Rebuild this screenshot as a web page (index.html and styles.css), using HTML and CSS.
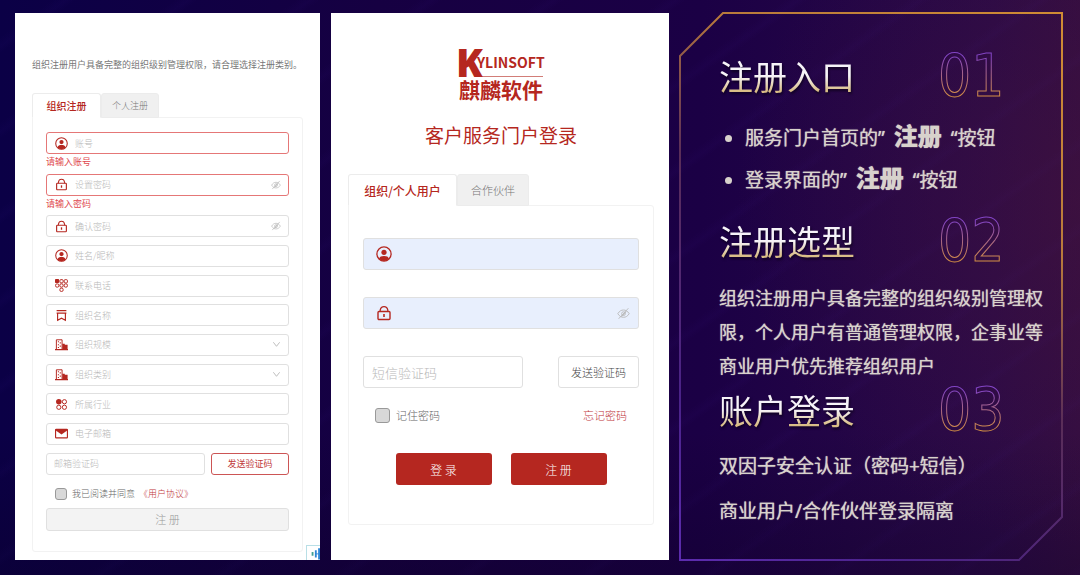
FILE: index.html
```html
<!DOCTYPE html>
<html lang="zh-CN">
<head>
  <meta charset="UTF-8" />
  <meta name="viewport" content="width=device-width, initial-scale=1.0" />
  <title>客户服务门户 - 注册与登录</title>
  <link rel="stylesheet" href="styles.css">
</head>
<body>
  <!-- shared icons -->
  <svg class="sprite" aria-hidden="true">
    <symbol id="user" viewBox="0 0 16 16">
      <circle cx="8" cy="8" r="7.1" fill="none" stroke="currentColor" stroke-width="1.3" />
      <circle cx="8" cy="6.3" r="2.6" fill="currentColor" />
      <path d="M3 12.8C3.6 10.6 5.4 9.9 8 9.9s4.4.7 5 2.9A7 7 0 0 1 8 15a7 7 0 0 1-5-2.2z" fill="currentColor" />
    </symbol>
    <symbol id="lock" viewBox="0 0 16 16">
      <rect x="2" y="6.5" width="12" height="8" rx="1" fill="none" stroke="currentColor" stroke-width="1.4" />
      <path d="M4.2 5.2C4.6 2.8 6 1.6 8 1.6s3.4 1.2 3.8 3.6v1.3M4.2 5v1.5" fill="none" stroke="currentColor" stroke-width="1.3" />
      <path d="M8 9v3" stroke="currentColor" stroke-width="1.6" />
    </symbol>
    <symbol id="phone" viewBox="0 0 16 16">
      <rect x="0" y="0" width="5" height="5" rx="1" fill="currentColor" />
      <g fill="none" stroke="currentColor" stroke-width="1.2">
        <rect x="6" y=".8" width="4" height="4" rx="1.2" />
        <rect x="11.3" y=".8" width="4" height="4" rx="1.2" />
        <rect x=".7" y="6" width="4" height="4" rx="1.6" />
        <rect x="6" y="6" width="4" height="4" rx="1.6" />
        <rect x="11.3" y="6" width="4" height="4" rx="1.6" />
        <rect x="6" y="11.3" width="4" height="4" rx="1.6" />
      </g>
    </symbol>
    <symbol id="org" viewBox="0 0 16 16">
      <path d="M2 2h12" stroke="currentColor" stroke-width="1.5" />
      <path d="M3.2 5h9.6v9L8 11.4 3.2 14zM2 5h12" fill="none" stroke="currentColor" stroke-width="1.4" />
    </symbol>
    <symbol id="building" viewBox="0 0 16 16">
      <path d="M1.7 14V2.2h7V14" fill="none" stroke="currentColor" stroke-width="1.2" />
      <path d="M9 7h3v1.2h3.500V14H9zM0 13.6h16V15H0z" fill="currentColor" />
      <path d="M3.5 4.5h1.4M5.8 6h1.4M3.5 8.3h1.4M5.8 10h1.4M3.5 11.6h1.4" stroke="currentColor" stroke-width="1.3" />
    </symbol>
    <symbol id="trade" viewBox="0 0 16 16">
      <circle cx="4.7" cy="4.6" r="3.4" fill="currentColor" />
      <g fill="none" stroke="currentColor" stroke-width="1.2">
        <circle cx="11.6" cy="4.6" r="2.6" />
        <circle cx="4.7" cy="11.4" r="2.6" />
        <circle cx="11.6" cy="11.4" r="2.6" />
      </g>
    </symbol>
    <symbol id="mail" viewBox="0 0 16 16">
      <rect x=".7" y="2.7" width="14.6" height="10.6" rx=".8" fill="none" stroke="currentColor" stroke-width="1.4" />
      <path d="M1 2.6h14v1.6L8 9.2 1 4.2z" fill="currentColor" />
    </symbol>
    <symbol id="eye" viewBox="0 0 16 16">
      <g fill="none" stroke="currentColor" stroke-width="1.1">
        <path d="M1 8.2C3 4.9 5.3 3.7 8 3.7s5 1.2 7 4.5c-2 3.3-4.3 4.5-7 4.5S3 11.5 1 8.2z" />
        <circle cx="8" cy="8.2" r="2.3" />
        <path d="M14 1.5 2 14.5M11.5 5.5l-6 6.5" />
      </g>
    </symbol>
  </svg>

  <main class="slide">
    <section class="panel register">
      <p class="intro">组织注册用户具备完整的组织级别管理权限，请合理选择注册类别。</p>
      <div class="tabs">
        <button type="button" class="tab active">组织注册</button>
        <button type="button" class="tab">个人注册</button>
      </div>
      <form class="box register-form">
        <div>
          <div class="field invalid">
            <svg class="icon"><use href="#user" /></svg>
            <input name="account" placeholder="账号" aria-label="账号" />
          </div>
          <p class="error">请输入账号</p>
        </div>
        <div>
          <div class="field invalid">
            <svg class="icon"><use href="#lock" /></svg>
            <input type="password" name="password" placeholder="设置密码" aria-label="设置密码" />
            <svg class="eye"><use href="#eye" /></svg>
          </div>
          <p class="error">请输入密码</p>
        </div>
        <div class="field">
          <svg class="icon"><use href="#lock" /></svg>
          <input type="password" name="confirm" placeholder="确认密码" aria-label="确认密码" />
          <svg class="eye"><use href="#eye" /></svg>
        </div>
        <div class="field">
          <svg class="icon"><use href="#user" /></svg>
          <input name="nickname" placeholder="姓名/昵称" aria-label="姓名/昵称" />
        </div>
        <div class="field">
          <svg class="icon"><use href="#phone" /></svg>
          <input type="tel" name="phone" placeholder="联系电话" aria-label="联系电话" />
        </div>
        <div class="field">
          <svg class="icon"><use href="#org" /></svg>
          <input name="org" placeholder="组织名称" aria-label="组织名称" />
        </div>
        <div class="field">
          <svg class="icon"><use href="#building" /></svg>
          <select name="scale" aria-label="组织规模"><option>组织规模</option></select>
          <svg class="chevron" viewBox="0 0 10 10"><path d="M1.5 2.5 5 7l3.5-4.5" /></svg>
        </div>
        <div class="field">
          <svg class="icon"><use href="#building" /></svg>
          <select name="type" aria-label="组织类别"><option>组织类别</option></select>
          <svg class="chevron" viewBox="0 0 10 10"><path d="M1.5 2.5 5 7l3.5-4.5" /></svg>
        </div>
        <div class="field">
          <svg class="icon"><use href="#trade" /></svg>
          <input name="trade" placeholder="所属行业" aria-label="所属行业" />
        </div>
        <div class="field">
          <svg class="icon"><use href="#mail" /></svg>
          <input type="email" name="email" placeholder="电子邮箱" aria-label="电子邮箱" />
        </div>
        <div class="code-row">
          <div class="field"><input name="code" placeholder="邮箱验证码" aria-label="邮箱验证码" /></div>
          <button type="button" class="send">发送验证码</button>
        </div>
        <div class="agree">
          <label><input type="checkbox" name="agree" />我已阅读并同意</label>
          <a href="#">《用户协议》</a>
        </div>
        <button type="submit" class="submit" disabled>注 册</button>
      </form>
      <div class="widget">
        <svg viewBox="0 0 14 15">
          <path d="M6 6.5v4" stroke="#3f9f94" stroke-width="2" />
          <path d="M9.500 4.5v8M13 2.5v12" stroke="#2f86d6" stroke-width="2" />
          <path d="M9 8.5h5" stroke="#2f86d6" />
        </svg>
      </div>
    </section>

    <section class="panel login">
      <svg class="logo" viewBox="0 0 86 54" role="img" aria-label="KYLINSOFT 麒麟软件">
        <text class="logo-k" x="-2" y="29">K</text>
        <text class="logo-en" x="19" y="20">YLINSOFT</text>
        <path d="M24 28.5h61" stroke="#b52720" stroke-width="1" opacity=".6" />
        <text class="logo-cn" x="1" y="50">麒麟软件</text>
      </svg>
      <h1>客户服务门户登录</h1>
      <div class="tabs">
        <button type="button" class="tab active">组织/个人用户</button>
        <button type="button" class="tab">合作伙伴</button>
      </div>
      <form class="box login-form">
        <div class="field filled">
          <svg class="icon"><use href="#user" /></svg>
          <input name="user" aria-label="账号" />
        </div>
        <div class="field filled">
          <svg class="icon"><use href="#lock" /></svg>
          <input type="password" name="pass" aria-label="密码" />
          <svg class="eye"><use href="#eye" /></svg>
        </div>
        <div class="code-row">
          <div class="field"><input name="sms" placeholder="短信验证码" aria-label="短信验证码" /></div>
          <button type="button" class="send">发送验证码</button>
        </div>
        <div class="remember">
          <label><input type="checkbox" name="remember" />记住密码</label>
          <a href="#">忘记密码</a>
        </div>
        <div class="actions">
          <button type="submit">登 录</button>
          <button type="button">注 册</button>
        </div>
      </form>
    </section>

    <section class="notes">
      <svg class="frame" viewBox="0 0 383 547" preserveAspectRatio="none" aria-hidden="true">
        <defs>
          <linearGradient id="frameLine" gradientUnits="userSpaceOnUse" x1="383" y1="0" x2="0" y2="547">
            <stop offset="0" stop-color="#d08c34" />
            <stop offset=".3" stop-color="#b87a3c" />
            <stop offset=".5" stop-color="#5a2e58" />
            <stop offset=".8" stop-color="#4a2288" />
            <stop offset="1" stop-color="#5c2cae" />
          </linearGradient>
        </defs>
        <path d="M0 43 43 0h339v504l-43 43H0z" />
      </svg>
      <div class="topic">
        <h2>注册入口</h2>
        <svg class="num" viewBox="0 0 66 50"><text x="0" y="45">01</text></svg>
      </div>
      <ul>
        <li>服务门户首页的” <strong>注册</strong> “按钮</li>
        <li>登录界面的” <strong>注册</strong> “按钮</li>
      </ul>
      <div class="topic">
        <h2>注册选型</h2>
        <svg class="num" viewBox="0 0 66 50"><text x="0" y="45">02</text></svg>
      </div>
      <p class="about">组织注册用户具备完整的组织级别管理权<br>限，个人用户有普通管理权限，企事业等<br>商业用户优先推荐组织用户</p>
      <div class="topic">
        <h2>账户登录</h2>
        <svg class="num" viewBox="0 0 66 50"><text x="0" y="45">03</text></svg>
      </div>
      <div class="points">
        <p>双因子安全认证（密码+短信）</p>
        <p>商业用户/合作伙伴登录隔离</p>
      </div>
    </section>
  </main>

  <svg class="sprite" aria-hidden="true">
    <defs>
      <linearGradient id="numLine" x1="0" y1="0" x2="0" y2="1">
        <stop offset=".2" stop-color="#8244c4" />
        <stop offset=".8" stop-color="#d08c44" />
      </linearGradient>
    </defs>
  </svg>
</body>
</html>
```
FILE: styles.css
```css
* {
  box-sizing: border-box;
}

body {
  margin: 0;
  font-family: "Noto Sans CJK SC", sans-serif;
  background: #180040;
}

p, h1, h2, ul {
  margin: 0;
  padding: 0;
  font-weight: normal;
}

button, input, select {
  font-family: inherit;
  font-weight: inherit;
}

button {
  padding: 0;
  cursor: pointer;
}

a {
  color: #c0353a;
  text-decoration: none;
}

.sprite {
  position: absolute;
  width: 0;
  height: 0;
}

.slide {
  display: grid;
  grid-template-columns: 305fr 338fr 383fr;
  gap: 11px;
  min-height: 100vh;
  padding: 13px 17px 15px 15px;
  background:
    radial-gradient(circle at 100% 35%, rgba(70, 20, 60, 0.45), transparent 30%),
    linear-gradient(to bottom, transparent 75%, rgba(10, 0, 30, 0.3)),
    repeating-linear-gradient(145deg, transparent 0 30px, rgba(80, 35, 190, 0.04) 38px, transparent 44px 70px),
    linear-gradient(to right, #0b0046, #160042 35%, #1b0045 65%, #2b0a47 92%, #330d42);
}

.panel {
  display: flex;
  flex-direction: column;
  position: relative;
  background: #fff;
  font-weight: 300;
}

.tabs {
  display: flex;
  position: relative;
  margin-bottom: -1px;
}

.tab {
  border: 1px solid #ececec;
  border-radius: 3px 3px 0 0;
  background: #f0f0f0;
  color: #777;
}

.tab.active {
  border-bottom-color: #fff;
  background: #fff;
  color: #b52720;
  font-weight: 500;
}

.box {
  display: flex;
  flex-direction: column;
  flex: 1;
  border: 1px solid #f2f2f2;
  border-radius: 0 3px 3px 3px;
}

.field {
  display: flex;
  align-items: center;
  border: 1px solid #e0e0e0;
  border-radius: 3px;
  background: #fff;
}

.field input, .field select {
  flex: 1;
  width: 100%;
  min-width: 0;
  padding: 0;
  border: 0;
  outline: 0;
  appearance: none;
  background: none;
  color: #b8b8b8;
}

.field input::placeholder {
  color: #b8b8b8;
}

.icon {
  flex: none;
  color: #b52720;
}

.eye {
  flex: none;
  color: #b8b8b8;
}

.code-row, .agree, .remember, .actions {
  display: flex;
}

.send {
  border: 1px solid #e0e0e0;
  border-radius: 3px;
  background: #fff;
}

input[type="checkbox"] {
  margin: 0;
  appearance: none;
  border: 1px solid #999;
  border-radius: 3px;
  background: #d8d8d8;
}

label {
  display: flex;
  align-items: center;
  color: #666;
}

/* register panel */
.register {
  padding: 44px 17px 8px;
  font-size: 9px;
}

.intro {
  height: 36px;
  line-height: 16px;
  white-space: nowrap;
  color: #777;
}

.register .tab {
  width: 58px;
  height: 25px;
  font-size: 9px;
}

.register .tab.active {
  width: 69px;
  font-size: 10px;
}

.register-form {
  justify-content: space-between;
  padding: 14px 13px 20px;
}

.register .field {
  height: 22px;
  padding: 0 7px;
}

.register .field input, .register .field select {
  font-size: 9px;
}

.register .field.invalid {
  border-color: #e57777;
}

.register .icon {
  width: 13px;
  height: 13px;
  margin: 0 7px 0 1px;
}

.register .eye {
  width: 10px;
  height: 10px;
}

.chevron {
  width: 9px;
  height: 9px;
  fill: none;
  stroke: #b8b8b8;
}

.error {
  height: 12px;
  line-height: 16px;
  color: #e0474e;
}

.register .code-row {
  gap: 6px;
}

.register .code-row .field {
  flex: 1;
}

.register .send {
  width: 78px;
  border-color: #cc5555;
  color: #c03a3a;
  font-size: 9px;
  font-weight: 400;
}

.agree {
  align-items: flex-end;
  gap: 4px;
  height: 18px;
  padding-left: 9px;
}

.agree input {
  width: 12px;
  height: 12px;
  margin-right: 5px;
}

.submit {
  height: 23px;
  border: 1px solid #e0e0e0;
  border-radius: 3px;
  background: #f3f3f3;
  color: #999;
  font-size: 11px;
}

.widget {
  position: absolute;
  right: 0;
  bottom: 0;
  width: 14px;
  height: 15px;
  border: 1px solid #b9dfe6;
  border-width: 1px 0 0 1px;
}

.widget svg {
  display: block;
}

/* login panel */
.login {
  padding: 35px 15px 35px 17px;
  font-size: 11px;
}

.logo {
  width: 86px;
  height: 54px;
  margin: 0 auto;
  overflow: visible;
  fill: #b52720;
  font-weight: 700;
}

.logo-k {
  font-family: "Open Sans", sans-serif;
  font-size: 39px;
  font-weight: 800;
}

.logo-en {
  font-size: 14px;
}

.logo-cn {
  font-size: 21px;
}

.login h1 {
  margin: 18px 0 24px;
  line-height: 30px;
  text-align: center;
  font-size: 19px;
  color: #b52720;
}

.login .tab {
  width: 72px;
  height: 32px;
  font-size: 11px;
}

.login .tab.active {
  width: 109px;
  font-size: 12px;
}

.login-form {
  padding: 32px 14px 0;
}

.login .field {
  height: 32px;
  margin-bottom: 27px;
  padding: 0 8px;
}

.login .field input {
  font-size: 13px;
}

.field.filled {
  background: #e8effd;
}

.login .icon {
  width: 16px;
  height: 16px;
  margin: 0 8px 0 4px;
}

.login .eye {
  width: 13px;
  height: 13px;
}

.login .code-row {
  justify-content: space-between;
}

.login .code-row .field {
  width: 58%;
  margin: 0;
}

.login .send {
  width: 81px;
  color: #444;
  font-size: 11px;
}

.remember {
  justify-content: space-between;
  align-items: center;
  height: 18px;
  margin: 18px 12px 29px;
}

.remember input {
  width: 15px;
  height: 15px;
  margin-right: 6px;
}

.actions {
  justify-content: center;
  gap: 19px;
}

.actions button {
  width: 96px;
  height: 32px;
  border: 0;
  border-radius: 3px;
  background: #b52720;
  color: #fff;
  font-size: 12px;
}

/* notes panel */
.notes {
  position: relative;
  padding: 38px 0 0 39px;
  font-family: "Noto Sans", "Noto Sans CJK SC", sans-serif;
  font-size: 19px;
  font-weight: 500;
  color: #d8d2cc;
}

.frame {
  position: absolute;
  inset: 0;
  width: 100%;
  height: 100%;
  overflow: visible;
  fill: none;
  stroke: url(#frameLine);
  stroke-width: 2px;
}

.topic {
  display: flex;
  justify-content: space-between;
  align-items: center;
  height: 50px;
  padding-right: 59px;
}

.topic h2 {
  font-family: "Noto Sans CJK SC", sans-serif;
  font-size: 34px;
  line-height: 50px;
  background: linear-gradient(#f6f3f8 50%, #d9bd85 80%);
  background-clip: text;
  color: transparent;
  filter: drop-shadow(1px 2px 1px rgba(0, 0, 0, 0.5));
}

.num {
  width: 66px;
  height: 50px;
  overflow: visible;
  fill: none;
  stroke: url(#numLine);
  font-family: "DejaVu Sans Condensed", "DejaVu Sans", sans-serif;
  font-size: 58px;
  font-weight: 400;
}

.notes ul {
  margin: 14px 0 17px;
  padding-left: 26px;
}

.notes li {
  height: 42px;
  line-height: 42px;
}

.notes li, .notes p {
  text-shadow: 0 0 1px #d8d2cc;
}

.notes strong {
  margin: 0 4px;
  font-size: 24px;
  font-weight: 900;
}

.about {
  margin: 15px 0 2px;
  line-height: 34px;
  font-size: 18px;
  white-space: nowrap;
}

.points {
  margin-top: 9px;
  line-height: 45px;
}
```
